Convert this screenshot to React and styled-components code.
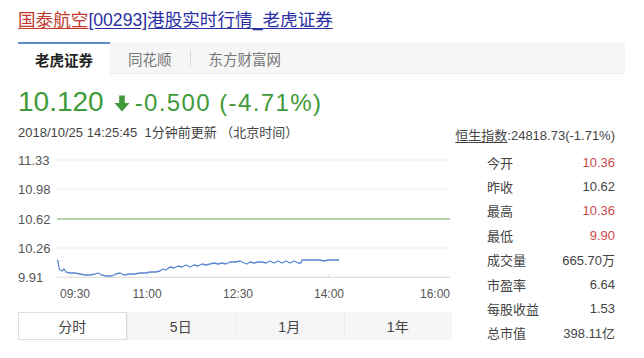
import styled, { createGlobalStyle } from 'styled-components';

const GlobalStyle = createGlobalStyle`
  body {
    margin: 0;
    background: #fff;
    font-family: "Liberation Sans", Arial, "Noto Sans CJK SC", sans-serif;
    color: #333;
  }
`;

const GREEN = '#3f9a3a';
const RED = '#d0494a';

const Page = styled.div`
  width: 644px;
  height: 358px;
  padding: 9px 0 0 18px;
  box-sizing: border-box;
  overflow: hidden;
`;

const Title = styled.div`
  font-size: 17.6px;
  line-height: 22px;
  white-space: nowrap;
`;

const TitleLink = styled.a`
  color: ${(p) => (p.$red ? '#c23a2c' : '#2b2fa6')};
  text-decoration: underline;
  text-underline-offset: 2px;
`;

const TabBar = styled.div`
  display: flex;
  align-items: stretch;
  width: 607px;
  height: 31px;
  margin-top: 11px;
  background: #f6f6f6;
  border-bottom: 1px solid #ececec;
`;

const Tab = styled.div`
  display: flex;
  align-items: center;
  padding: 0 ${(p) => (p.$active ? '17px' : '18px')};
  font-size: 14.5px;
  color: ${(p) => (p.$active ? '#222' : '#777')};
  background: ${(p) => (p.$active ? '#fff' : 'transparent')};
  border-top: 2px solid ${(p) => (p.$active ? '#5b8dcc' : 'transparent')};
  margin-bottom: ${(p) => (p.$active ? '-1px' : '0')};
  font-weight: ${(p) => (p.$active ? 600 : 400)};
`;

const TabSep = styled.span`
  width: 1px;
  height: 16px;
  align-self: center;
  background: #ddd;
`;

const PriceRow = styled.div`
  display: flex;
  align-items: baseline;
  gap: 4px;
  margin-top: 11px;
  color: ${GREEN};
  line-height: 34px;
`;

const Price = styled.span`
  font-size: 28px;
`;

const Change = styled.span`
  font-size: 24px;
  letter-spacing: 1.4px;
`;

const Arrow = styled.svg`
  width: 16px;
  height: 17px;
  align-self: center;
  margin: 2px 1px 0 6px;
`;

const MetaRow = styled.div`
  display: flex;
  justify-content: space-between;
  align-items: flex-end;
  width: 597px;
  height: 20px;
  margin-top: 1px;
  font-size: 13px;
  color: #444;
`;

const Stamp = styled.span`
  white-space: pre;
`;

const Index = styled.span`
  font-size: 13px;
  color: #444;
  margin-bottom: -3px;
  u {
    text-underline-offset: 2px;
  }
`;

const Body = styled.div`
  display: flex;
  margin-top: 10px;
`;

const LeftCol = styled.div`
  width: 434px;
  display: flex;
  flex-direction: column;
`;

const Chart = styled.svg`
  display: block;
  width: 434px;
  height: 152px;
`;

const Periods = styled.div`
  display: grid;
  grid-template-columns: repeat(4, 1fr);
  height: 28px;
  margin-top: 9px;
  background: #f6f6f6;
`;

const Period = styled.div`
  display: flex;
  align-items: center;
  justify-content: center;
  font-size: 14px;
  color: #444;
  background: ${(p) => (p.$active ? '#fff' : 'transparent')};
  border: 1px solid ${(p) => (p.$active ? '#ddd' : 'transparent')};
  border-left: ${(p) => (p.$active ? '1px solid #ddd' : '1px solid #ececec')};
`;

const Stats = styled.div`
  margin-left: 35px;
  width: 128px;
  display: flex;
  flex-direction: column;
  margin-top: -1px;
`;

const StatRow = styled.div`
  display: flex;
  justify-content: space-between;
  align-items: center;
  height: 24.4px;
  font-size: 13px;
`;

const StatLabel = styled.span`
  color: #444;
`;

const StatValue = styled.span`
  color: ${(p) => (p.$red ? RED : '#444')};
`;

const stats = [
  ['今开', '10.36', true],
  ['昨收', '10.62'],
  ['最高', '10.36', true],
  ['最低', '9.90', true],
  ['成交量', '665.70万'],
  ['市盈率', '6.64'],
  ['每股收益', '1.53'],
  ['总市值', '398.11亿'],
];

// price line, page coords
const pts = [
  [57, 259], [58, 260], [59, 267], [60, 269], [62, 270], [64, 268], [66, 271], [70, 272],
  [75, 272], [80, 273], [85, 274], [90, 274], [95, 273], [98, 272], [102, 274], [106, 275],
  [112, 275], [116, 273], [120, 272], [124, 274], [130, 273], [135, 273], [140, 272],
  [146, 272], [150, 271], [156, 271], [160, 270], [163, 268], [166, 269], [170, 266],
  [174, 267], [178, 265], [182, 266], [186, 264], [190, 266], [194, 264], [198, 265],
  [202, 263], [206, 264], [210, 263], [214, 262], [218, 263], [222, 262], [226, 263],
  [230, 261], [236, 261], [240, 260], [244, 262], [247, 263], [250, 261], [254, 262],
  [258, 261], [262, 261], [266, 262], [270, 260], [274, 262], [278, 260], [282, 262],
  [286, 260], [290, 262], [294, 260], [298, 262], [301, 262], [302, 259], [310, 259],
  [320, 259], [324, 260], [328, 259], [332, 259], [339, 259],
];
const OX = 18;
const OY = 150;
const linePath = pts
  .map(([x, y], i) => `${i ? 'L' : 'M'}${x - OX} ${y - OY}`)
  .join(' ');

const yTicks = [
  ['11.33', 9, false],
  ['10.98', 38, false],
  ['10.62', 68, true],
  ['10.26', 97, false],
  ['9.91', 126, false],
];

const xTicks = [
  ['09:30', 42, 'start'],
  ['11:00', 129, 'middle'],
  ['12:30', 220, 'middle'],
  ['14:00', 311, 'middle'],
  ['16:00', 432, 'end'],
];

function PriceChart() {
  return (
    <Chart viewBox="0 0 434 152">
      {yTicks.map(([label, y, base]) => (
        <g key={label}>
          <line
            x1="39"
            x2="432"
            y1={y}
            y2={y}
            stroke={base ? '#9cc48e' : '#ececec'}
            strokeWidth={base ? 1.5 : 1}
          />
          <text x="0" y={y + 5} fontSize="13" fill="#555" fontFamily="Liberation Sans, Arial, sans-serif">
            {label}
          </text>
        </g>
      ))}
      <line x1="39" x2="432" y1="126.5" y2="126.5" stroke="#e2e2e2" />
      <line x1="129" x2="129" y1="123" y2="127" stroke="#ddd" />
      <line x1="311" x2="311" y1="123" y2="127" stroke="#ddd" />
      {xTicks.map(([label, x, anchor]) => (
        <text
          key={label}
          x={x}
          y="147"
          textAnchor={anchor}
          fontSize="12"
          fill="#555"
          fontFamily="Liberation Sans, Arial, sans-serif"
        >
          {label}
        </text>
      ))}
      <path d={linePath} fill="none" stroke="#5b87d0" strokeWidth="1.3" strokeLinejoin="round" />
    </Chart>
  );
}

export default function App() {
  return (
    <>
      <GlobalStyle />
      <Page>
        <Title>
          <TitleLink $red>国泰航空</TitleLink>
          <TitleLink>[00293]港股实时行情_老虎证券</TitleLink>
        </Title>
        <TabBar>
          <Tab $active>老虎证券</Tab>
          <Tab>同花顺</Tab>
          <TabSep />
          <Tab>东方财富网</Tab>
        </TabBar>
        <PriceRow>
          <Price>10.120</Price>
          <Arrow viewBox="0 0 16 17">
            <path d="M5.2 0.5h5.6v7.5h4.7l-7.5 8.5-7.5-8.5h4.7z" fill={GREEN} />
          </Arrow>
          <Change>-0.500 (-4.71%)</Change>
        </PriceRow>
        <MetaRow>
          <Stamp>2018/10/25 14:25:45  1分钟前更新 （北京时间）</Stamp>
          <Index>
            <u>恒生指数</u>:24818.73(-1.71%)
          </Index>
        </MetaRow>
        <Body>
          <LeftCol>
            <PriceChart />
            <Periods>
              <Period $active>分时</Period>
              <Period>5日</Period>
              <Period>1月</Period>
              <Period>1年</Period>
            </Periods>
          </LeftCol>
          <Stats>
            {stats.map(([label, value, red]) => (
              <StatRow key={label}>
                <StatLabel>{label}</StatLabel>
                <StatValue $red={red}>{value}</StatValue>
              </StatRow>
            ))}
          </Stats>
        </Body>
      </Page>
    </>
  );
}
